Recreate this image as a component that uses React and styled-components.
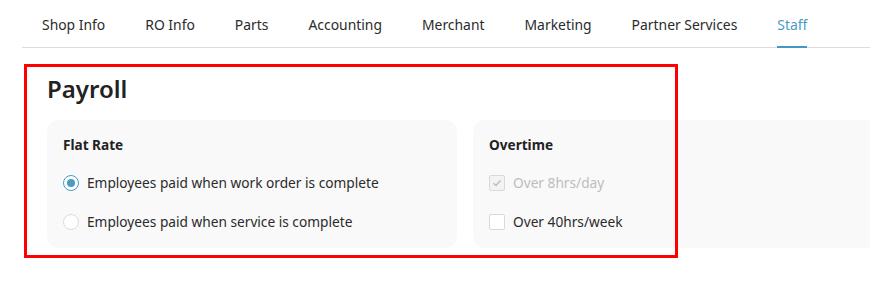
import React from "react";
import styled, { createGlobalStyle } from "styled-components";

const GlobalStyle = createGlobalStyle`
  html, body {
    margin: 0;
    padding: 0;
    overflow: hidden;
    background: #ffffff;
  }
  body {
    font-family: "Noto Sans", "Open Sans", sans-serif;
    color: #212529;
  }
`;

const Page = styled.div`
  position: relative;
  width: 870px;
  height: 283px;
  overflow: hidden;
`;

const TabBar = styled.nav`
  display: flex;
  margin-left: 22px;
  border-bottom: 1px solid #dcdcdc;
  box-sizing: border-box;
  height: 48px;
`;

const Tab = styled.div`
  position: relative;
  padding: 1px 20px 0;
  display: flex;
  align-items: center;
  font-size: 13.9px;
  color: ${(p) => (p.$active ? "#4a9cc4" : "#2b2b2b")};
  white-space: nowrap;
  &::after {
    content: "";
    display: ${(p) => (p.$active ? "block" : "none")};
    position: absolute;
    left: 20px;
    right: 20px;
    bottom: -1px;
    height: 2px;
    background: #4299c0;
  }
`;

const Section = styled.section`
  padding: 26px 0 0 47px;
`;

const Heading = styled.h2`
  margin: 0 0 16px;
  font-size: 24px;
  font-weight: 600;
  line-height: 30px;
  color: #222;
`;

const CardRow = styled.div`
  display: flex;
  gap: 16px;
`;

const Card = styled.div`
  flex: 0 0 410px;
  box-sizing: border-box;
  height: 128px;
  background: #f9f9f9;
  border-radius: 12px;
  padding: 16px 16px;
`;

const CardTitle = styled.div`
  font-size: 13.6px;
  font-weight: 700;
  color: #222;
  line-height: 18px;
  margin-bottom: 19px;
`;

const Options = styled.div`
  display: flex;
  flex-direction: column;
  gap: 19px;
`;

const Option = styled.label`
  display: flex;
  align-items: center;
  gap: 8px;
  font-size: 13.7px;
  line-height: 20px;
  color: ${(p) => (p.$disabled ? "#bdbdbd" : "#2b2b2b")};
`;

const Radio = styled.span`
  width: 16px;
  height: 16px;
  box-sizing: border-box;
  border-radius: 50%;
  border: 1px solid ${(p) => (p.$checked ? "#4a9cc4" : "#dcdcdc")};
  background: #fff;
  display: flex;
  align-items: center;
  justify-content: center;
  &::after {
    content: "";
    display: ${(p) => (p.$checked ? "block" : "none")};
    width: 8px;
    height: 8px;
    border-radius: 50%;
    background: #4a9cc4;
  }
`;

const Checkbox = styled.span`
  width: 16px;
  height: 16px;
  box-sizing: border-box;
  border-radius: 2px;
  border: 1px solid #d9d9d9;
  background: ${(p) => (p.$disabled ? "#f3f3f3" : "#fff")};
  display: flex;
  align-items: center;
  justify-content: center;
`;

const Annotation = styled.div`
  position: absolute;
  left: 24px;
  top: 64px;
  width: 654px;
  height: 194px;
  box-sizing: border-box;
  border: 3px solid #ff0000;
  pointer-events: none;
`;

const tabs = [
  "Shop Info",
  "RO Info",
  "Parts",
  "Accounting",
  "Merchant",
  "Marketing",
  "Partner Services",
  "Staff",
];

export default function App() {
  return (
    <Page>
      <GlobalStyle />
      <TabBar>
        {tabs.map((t) => (
          <Tab key={t} $active={t === "Staff"}>
            {t}
          </Tab>
        ))}
      </TabBar>
      <Section>
        <Heading>Payroll</Heading>
        <CardRow>
          <Card>
            <CardTitle>Flat Rate</CardTitle>
            <Options>
              <Option>
                <Radio $checked />
                Employees paid when work order is complete
              </Option>
              <Option>
                <Radio />
                Employees paid when service is complete
              </Option>
            </Options>
          </Card>
          <Card>
            <CardTitle>Overtime</CardTitle>
            <Options>
              <Option $disabled>
                <Checkbox $disabled>
                  <svg width="10" height="10" viewBox="0 0 10 10">
                    <path
                      d="M1.5 5.2 L4 7.5 L8.5 2.5"
                      fill="none"
                      stroke="#bdbdbd"
                      strokeWidth="1.5"
                    />
                  </svg>
                </Checkbox>
                Over 8hrs/day
              </Option>
              <Option>
                <Checkbox />
                Over 40hrs/week
              </Option>
            </Options>
          </Card>
        </CardRow>
      </Section>
      <Annotation />
    </Page>
  );
}
